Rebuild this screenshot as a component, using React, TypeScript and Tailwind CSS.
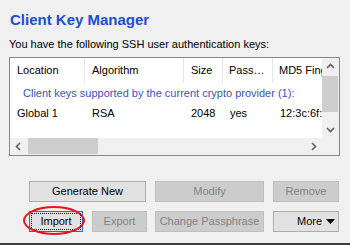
import React from 'react'

const font = { fontFamily: '"Liberation Sans", Arial, sans-serif' }

const Chevron: React.FC<{ dir: 'up' | 'down' | 'left' | 'right' }> = ({ dir }) => {
  const pts = {
    up: '1,6 4.5,2.5 8,6',
    down: '1,3 4.5,6.5 8,3',
    left: '6,1 2.5,4.5 6,8',
    right: '3,1 6.5,4.5 3,8',
  }[dir]
  return (
    <svg width="9" height="9" viewBox="0 0 9 9">
      <polyline points={pts} fill="none" stroke="#606060" strokeWidth="1.6" />
    </svg>
  )
}

const Btn: React.FC<{ label: string; w: string; disabled?: boolean }> = ({ label, w, disabled }) => (
  <div
    className={`${w} h-[21px] flex items-center justify-center border text-[11px] ${
      disabled ? 'bg-[#cccccc] border-[#bfbfbf] text-[#838383]' : 'bg-[#e1e1e1] border-[#adadad] text-black'
    }`}
  >
    {label}
  </div>
)

export default function App() {
  return (
    <div className="w-[350px] h-[245px] bg-[#f0f0f0] flex flex-col overflow-hidden relative" style={font}>
      <div className="pt-[10px] pl-[10px] text-[15px] leading-[20px] font-bold text-[#1c4ed4]">
        Client Key Manager
      </div>
      <div className="mt-[6px] pl-[9px] text-[11px] leading-[16px] text-black">
        You have the following SSH user authentication keys:
      </div>

      <div className="mt-[5px] ml-[9px] w-[331px] h-[99px] border border-[#828790] flex flex-col bg-white">
        <div className="flex h-[80px]">
          <div className="w-[312px] overflow-hidden text-[11px] text-black">
            <div className="flex h-[25px] items-stretch whitespace-nowrap">
              <div className="w-[75px] shrink-0 pl-[7px] flex items-center border-r border-[#e5e5e5]">Location</div>
              <div className="w-[99px] shrink-0 pl-[7px] flex items-center border-r border-[#e5e5e5]">Algorithm</div>
              <div className="w-[39px] shrink-0 pl-[7px] flex items-center border-r border-[#e5e5e5]">Size</div>
              <div className="w-[50px] shrink-0 pl-[6px] flex items-center border-r border-[#e5e5e5]">Pass…</div>
              <div className="w-[80px] shrink-0 pl-[6px] flex items-center">MD5 Fingerprint</div>
            </div>
            <div className="h-[20px] flex items-center pl-[13px] text-[#3b50c4] whitespace-nowrap">
              Client keys supported by the current crypto provider (1):
            </div>
            <div className="flex h-[20px] items-center whitespace-nowrap">
              <div className="w-[75px] shrink-0 pl-[7px]">Global 1</div>
              <div className="w-[99px] shrink-0 pl-[7px]">RSA</div>
              <div className="w-[39px] shrink-0 pl-[7px]">2048</div>
              <div className="w-[50px] shrink-0 pl-[7px]">yes</div>
              <div className="w-[80px] shrink-0 pl-[7px]">12:3c:6f:8a</div>
            </div>
          </div>
          <div className="w-[17px] bg-[#f0f0f0] flex flex-col">
            <div className="h-[17px] flex items-center justify-center">
              <Chevron dir="up" />
            </div>
            <div className="flex-1 pt-[1px]">
              <div className="h-[36px] bg-[#cdcdcd] mr-[1px]" />
            </div>
            <div className="h-[17px] flex items-center justify-center">
              <Chevron dir="down" />
            </div>
          </div>
        </div>
        <div className="flex h-[17px] bg-[#f0f0f0]">
          <div className="w-[17px] flex items-center justify-center">
            <Chevron dir="left" />
          </div>
          <div className="w-[278px] pl-[1px] py-[0px]">
            <div className="w-[70px] h-[16px] bg-[#cdcdcd]" />
          </div>
          <div className="w-[17px] flex items-center justify-center">
            <Chevron dir="right" />
          </div>
          <div className="w-[17px]" />
        </div>
      </div>

      <div className="mt-[25px] pl-[29px] flex">
        <Btn label="Generate New" w="w-[117px]" />
        <div className="ml-[9px]">
          <Btn label="Modify" w="w-[109px]" disabled />
        </div>
        <div className="ml-[9px]">
          <Btn label="Remove" w="w-[66px]" disabled />
        </div>
      </div>

      <div className="mt-[9px] pl-[29px] flex">
        <div className="relative w-[54px] h-[21px] border border-[#0078d7] bg-[#e1e1e1] p-[1px]">
          <div className="w-full h-full border border-dotted border-black flex items-center justify-center text-[11px] text-black">
            Import
          </div>
          <div className="absolute left-[-7px] top-[-6px] w-[62px] h-[29px] rounded-[50%] border-2 border-[#e3171c]" />
        </div>
        <div className="ml-[9px]">
          <Btn label="Export" w="w-[55px]" disabled />
        </div>
        <div className="ml-[8px]">
          <Btn label="Change Passphrase" w="w-[109px]" disabled />
        </div>
        <div className="ml-[9px] w-[66px] h-[21px] border border-[#adadad] bg-[#e1e1e1] flex items-center pl-[23px] text-[11px] text-black">
          More
          <svg className="ml-auto mr-[3px]" width="9" height="5" viewBox="0 0 9 5">
            <polygon points="0,0 9,0 4.5,5" fill="#000" />
          </svg>
        </div>
      </div>

      <div className="mt-auto h-[2px] bg-[#3c3c3c]" />
    </div>
  )
}
